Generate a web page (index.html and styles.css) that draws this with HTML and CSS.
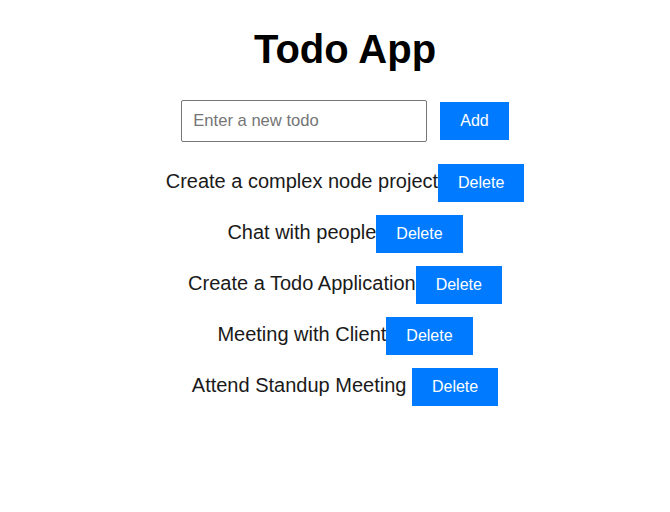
FILE: index.html
```html
<!DOCTYPE html>
<html lang="en">
<head>
<meta charset="utf-8">
<title>Todo App</title>
<link rel="stylesheet" href="styles.css">
</head>
<body>
<div class="app">
  <h1 class="title">Todo App</h1>
  <div class="add-row">
    <input class="todo-input" type="text" placeholder="Enter a new todo">
    <button class="btn">Add</button>
  </div>
  <ul class="todo-list">
    <li class="todo-item"><span class="todo-text">Create a complex node project</span><button class="btn">Delete</button></li>
    <li class="todo-item"><span class="todo-text">Chat with people</span><button class="btn">Delete</button></li>
    <li class="todo-item"><span class="todo-text">Create a Todo Application</span><button class="btn">Delete</button></li>
    <li class="todo-item"><span class="todo-text">Meeting with Client</span><button class="btn">Delete</button></li>
    <li class="todo-item"><span class="todo-text">Attend Standup Meeting </span><button class="btn">Delete</button></li>
  </ul>
</div>
</body>
</html>
```

FILE: styles.css
```css
html, body {
  margin: 0;
  padding: 0;
  background: #ffffff;
}

body {
  font-family: "Liberation Sans", Arial, sans-serif;
  color: #000;
}

.app {
  padding-left: 20px;
  text-align: center;
}

.title {
  margin: 26px 0 0;
  font-size: 40px;
  line-height: 46px;
  font-weight: bold;
  color: #000;
}

.add-row {
  display: flex;
  justify-content: center;
  align-items: center;
  gap: 13px;
  margin-top: 28px;
}

.todo-input {
  box-sizing: border-box;
  width: 246px;
  height: 42px;
  padding: 0 11px;
  font-family: "Liberation Sans", Arial, sans-serif;
  font-size: 16.6px;
  color: #333;
  border: 1px solid #767676;
  border-radius: 2px;
  outline: none;
}

.todo-input::placeholder {
  color: #757575;
}

.btn {
  padding: 10px 20px;
  font-family: "Liberation Sans", Arial, sans-serif;
  font-size: 16px;
  line-height: 18px;
  color: #ffffff;
  background: #007bff;
  border: none;
  border-radius: 0;
  cursor: pointer;
}

.todo-list {
  list-style: none;
  margin: 22px 0 0;
  padding: 0;
}

.todo-item {
  display: flex;
  justify-content: center;
  align-items: baseline;
  margin-bottom: 13px;
}

.todo-text {
  font-size: 20px;
  color: #1a1a1a;
  white-space: pre;
}
```
